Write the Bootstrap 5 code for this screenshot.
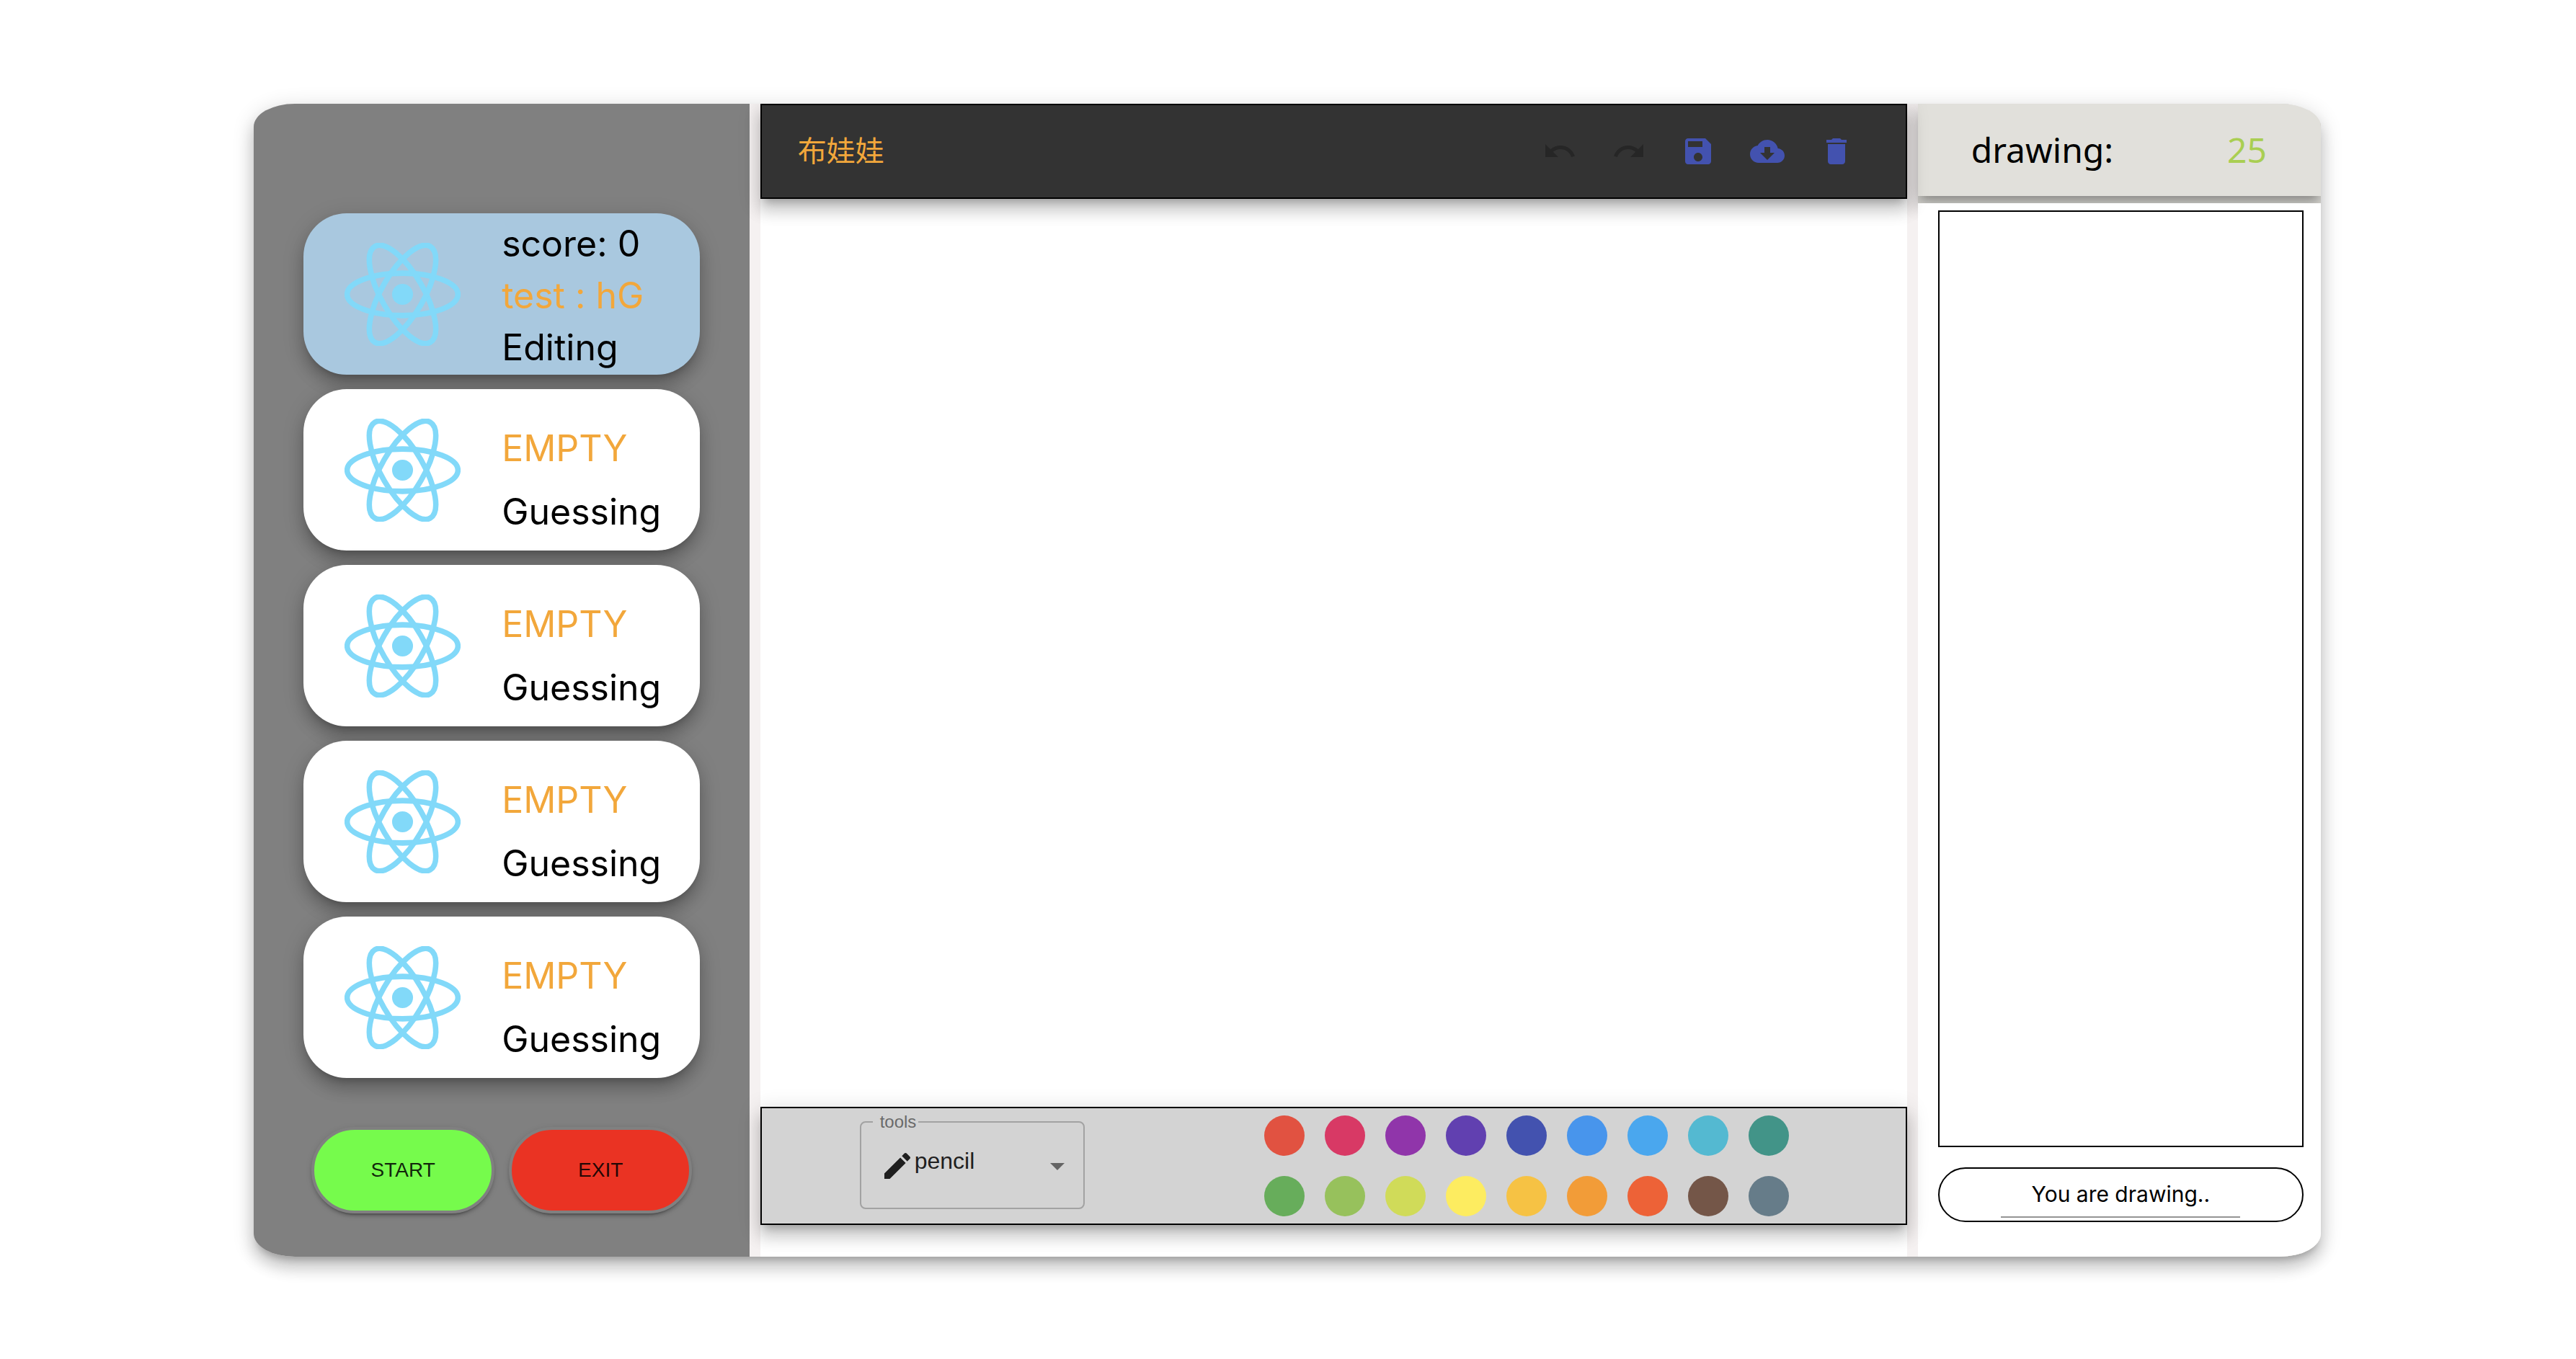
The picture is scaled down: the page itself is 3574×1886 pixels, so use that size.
<!DOCTYPE html>
<html lang="en">
<head>
<meta charset="utf-8">
<meta name="viewport" content="width=device-width, initial-scale=1">
<title>Draw and guess</title>
<link href="https://cdn.jsdelivr.net/npm/bootstrap@5.3.0/dist/css/bootstrap.min.css" rel="stylesheet">
<style>
:root { --lift: 0 10px 10px -6px rgba(0,0,0,.2), 0 16px 20px 2px rgba(0,0,0,.14), 0 6px 28px 4px rgba(0,0,0,.12); }
body { background: #fff; color: #000; font-family: Inter, "Noto Sans CJK SC", sans-serif; }
.page-wrap { padding: 144px 354px 142px 352px; min-height: 100vh; }
.room { border-radius: 57px / 32px; background: #f5f1f1; box-shadow: var(--lift); }
.room-inner { border-radius: 57px / 32px; }
.side { width: 24%; background: #808080; padding-top: 152px; }
.players { width: 80%; gap: 20px; }
.player { min-height: 224px; border-radius: 60px; background: #fff; box-shadow: var(--lift); font-size: 50px; line-height: 72px; }
.player.is-me { background: #a9c8df; }
.react-logo { width: 161px; height: 143px; }
.player-name { color: #f2a73b; }
.my-seat { padding-top: 4px; }
.open-seat { gap: 16px; padding-top: 28px; }
.side-actions { width: 528px; margin-top: 68px; gap: 20px; }
.pill-btn { height: 120px; border: 4px solid #808080; border-radius: 60px; font: 28px "Liberation Sans", sans-serif; color: rgba(0,0,0,.87);
  box-shadow: 0 6px 2px -4px rgba(0,0,0,.2), 0 4px 4px rgba(0,0,0,.14), 0 2px 10px rgba(0,0,0,.12); }
.start-btn { background: #76fb4c; }
.exit-btn { background: #ea3323; }
.board { width: 55.5%; background: #fff; }
.bar { border: 2px solid #000; box-shadow: var(--lift); z-index: 2; }
.top-bar { height: 132px; background: #333; padding: 0 48px 0 50px; }
.word { font-size: 40px; color: #f2a73b; font-family: "Noto Sans CJK SC", sans-serif; line-height: 48px; padding-bottom: 6px; }
.icon-btn { background: none; border: 0; padding: 24px; color: #4352af; line-height: 0; }
.icon-btn:disabled { color: #262626; }
.glyph { width: 48px; height: 48px; fill: currentColor; flex: none; }
.tool-bar { background: #d3d3d3; padding: 0 134px 0 136px; height: 164px; margin-bottom: 44px; }
.tool-field { width: 312px; height: 132px; border: 2px solid #a2a2a2; border-radius: 8px; margin-bottom: 12px; padding: 0 12px 0 26px; font-family: "Liberation Sans", sans-serif; }
.tool-field legend { float: none; width: auto; margin: 0 0 0 -10px; padding: 0 3px 0 10px; font-size: 24px; line-height: 22px; color: #6a6a6a; }
.tool-row { padding-top: 26px; color: #1f1f1f; }
.tool-row select { appearance: none; border: 0; background: none; padding: 0 0 14px; height: 48px; min-width: 0; font-size: 32px; line-height: 34px; color: #1f1f1f; }
.arrow { color: #646464; }
.palette { display: grid; grid-template-columns: repeat(9, 56px); gap: 28px; padding-right: 28px; }
.swatch { width: 56px; height: 56px; border: 0; border-radius: 50%; padding: 0; }
.chat { width: 19.5%; background: #e1e0db; }
.chat-head { height: 128px; margin-bottom: 10px; padding: 0 75px 0 74px; background: #e1e0db; box-shadow: var(--lift); font-family: "Noto Sans", sans-serif; font-size: 48px; line-height: 60px; }
.seconds { color: #a9ce52; }
.chat-body { background: #fff; padding: 10px 24px 48px 28px; gap: 28px; z-index: 1; }
.chat-log { border: 2px solid #000; }
.say { height: 76px; border: 2px solid #000; border-radius: 38px; }
.say input { width: 66%; height: 64px; border: 0; border-bottom: 2px solid #949494; background: none; padding: 0; font-size: 30px; text-align: center; color: #000; }
</style>
<script src="https://cdn.jsdelivr.net/npm/bootstrap@5.3.0/dist/js/bootstrap.bundle.min.js"></script>
</head>
<body>
<svg class="d-none" aria-hidden="true">
  <symbol id="react" viewBox="-11.5 -10.23 23 20.46">
    <circle r="2.08" fill="#82d9f9"/>
    <g fill="none" stroke="#82d9f9" stroke-width="1.08">
      <ellipse rx="11" ry="4.2"/><ellipse rx="11" ry="4.2" transform="rotate(60)"/><ellipse rx="11" ry="4.2" transform="rotate(120)"/>
    </g>
  </symbol>
</svg>
<main class="page-wrap d-flex">
  <div class="room flex-grow-1 d-flex">
    <div class="room-inner flex-grow-1 d-flex justify-content-between overflow-hidden">

      <aside class="side d-flex flex-column align-items-center">
        <div class="players d-flex flex-column">
          <div class="player is-me d-flex align-items-center">
            <div class="w-50 text-center lh-1"><svg class="react-logo"><use href="#react"/></svg></div>
            <div class="w-50 d-flex flex-column my-seat"><span>score: 0</span><span class="player-name">test : hG</span><span>Editing</span></div>
          </div>
          <div class="player d-flex align-items-center">
            <div class="w-50 text-center lh-1"><svg class="react-logo"><use href="#react"/></svg></div>
            <div class="w-50 d-flex flex-column open-seat"><span class="player-name">EMPTY</span><span>Guessing</span></div>
          </div>
          <div class="player d-flex align-items-center">
            <div class="w-50 text-center lh-1"><svg class="react-logo"><use href="#react"/></svg></div>
            <div class="w-50 d-flex flex-column open-seat"><span class="player-name">EMPTY</span><span>Guessing</span></div>
          </div>
          <div class="player d-flex align-items-center">
            <div class="w-50 text-center lh-1"><svg class="react-logo"><use href="#react"/></svg></div>
            <div class="w-50 d-flex flex-column open-seat"><span class="player-name">EMPTY</span><span>Guessing</span></div>
          </div>
          <div class="player d-flex align-items-center">
            <div class="w-50 text-center lh-1"><svg class="react-logo"><use href="#react"/></svg></div>
            <div class="w-50 d-flex flex-column open-seat"><span class="player-name">EMPTY</span><span>Guessing</span></div>
          </div>
        </div>
        <div class="side-actions d-flex">
          <button type="button" class="pill-btn start-btn flex-fill w-50">START</button>
          <button type="button" class="pill-btn exit-btn flex-fill w-50">EXIT</button>
        </div>
      </aside>

      <section class="board d-flex flex-column">
        <header class="bar top-bar position-relative d-flex align-items-center justify-content-between">
          <div class="word" lang="zh">布娃娃</div>
          <div class="d-flex me-n4">
            <button type="button" class="icon-btn" disabled aria-label="Undo"><svg class="glyph" viewBox="0 0 24 24"><path d="M12.5 8c-2.65 0-5.05.99-6.9 2.6L2 7v9h9l-3.62-3.62c1.39-1.16 3.16-1.88 5.12-1.88 3.54 0 6.55 2.31 7.6 5.5l2.37-.78C21.08 11.03 17.15 8 12.5 8z"/></svg></button>
            <button type="button" class="icon-btn" disabled aria-label="Redo"><svg class="glyph" viewBox="0 0 24 24"><path d="M18.4 10.6C16.55 8.99 14.15 8 11.5 8c-4.65 0-8.58 3.03-9.96 7.22L3.9 16c1.05-3.19 4.05-5.5 7.6-5.5 1.95 0 3.73.72 5.12 1.88L13 16h9V7l-3.6 3.6z"/></svg></button>
            <button type="button" class="icon-btn" aria-label="Save"><svg class="glyph" viewBox="0 0 24 24"><path d="M17 3H5c-1.11 0-2 .9-2 2v14c0 1.1.89 2 2 2h14c1.1 0 2-.9 2-2V7l-4-4zm-5 16c-1.66 0-3-1.34-3-3s1.34-3 3-3 3 1.34 3 3-1.34 3-3 3zm3-10H5V5h10v4z"/></svg></button>
            <button type="button" class="icon-btn" aria-label="Download"><svg class="glyph" viewBox="0 0 24 24"><path d="M19.35 10.04C18.67 6.59 15.64 4 12 4 9.11 4 6.6 5.64 5.35 8.04 2.34 8.36 0 10.91 0 14c0 3.31 2.69 6 6 6h13c2.76 0 5-2.24 5-5 0-2.64-2.05-4.78-4.65-4.96zM17 13l-5 5-5-5h3V9h4v4h3z"/></svg></button>
            <button type="button" class="icon-btn" aria-label="Delete"><svg class="glyph" viewBox="0 0 24 24"><path d="M6 19c0 1.1.9 2 2 2h8c1.1 0 2-.9 2-2V7H6v12zM19 4h-3.500l-1-1h-5l-1 1H5v2h14V4z"/></svg></button>
          </div>
        </header>
        <canvas class="flex-grow-1 w-100" height="1" aria-label="Drawing canvas"></canvas>
        <footer class="bar tool-bar position-relative d-flex align-items-center justify-content-between">
          <fieldset class="tool-field">
            <legend><label for="tool">tools</label></legend>
            <div class="tool-row d-flex align-items-center">
              <svg class="glyph" viewBox="0 0 24 24"><path d="M3 17.250V21h3.750L17.810 9.940l-3.750-3.750L3 17.250zM20.710 7.040c.39-.39.39-1.020 0-1.410l-2.340-2.340c-.39-.39-1.020-.39-1.410 0l-1.830 1.830 3.750 3.750 1.830-1.830z"/></svg>
              <select id="tool" class="flex-grow-1"><option>pencil</option></select>
              <svg class="glyph arrow" viewBox="0 0 24 24"><path d="M7 10l5 5 5-5z"/></svg>
            </div>
          </fieldset>
          <div class="palette">
            <button type="button" class="swatch" style="background:#e15241" aria-label="Red"></button>
            <button type="button" class="swatch" style="background:#d83965" aria-label="Pink"></button>
            <button type="button" class="swatch" style="background:#9035aa" aria-label="Purple"></button>
            <button type="button" class="swatch" style="background:#6140b0" aria-label="Deep purple"></button>
            <button type="button" class="swatch" style="background:#4352af" aria-label="Indigo"></button>
            <button type="button" class="swatch" style="background:#4895ec" aria-label="Blue"></button>
            <button type="button" class="swatch" style="background:#4aa7ee" aria-label="Light blue"></button>
            <button type="button" class="swatch" style="background:#54b9d1" aria-label="Cyan"></button>
            <button type="button" class="swatch" style="background:#429488" aria-label="Teal"></button>
            <button type="button" class="swatch" style="background:#67ad5b" aria-label="Green"></button>
            <button type="button" class="swatch" style="background:#97c15c" aria-label="Light green"></button>
            <button type="button" class="swatch" style="background:#d0db59" aria-label="Lime"></button>
            <button type="button" class="swatch" style="background:#fdec60" aria-label="Yellow"></button>
            <button type="button" class="swatch" style="background:#f6c244" aria-label="Amber"></button>
            <button type="button" class="swatch" style="background:#f29c38" aria-label="Orange"></button>
            <button type="button" class="swatch" style="background:#ed6237" aria-label="Deep orange"></button>
            <button type="button" class="swatch" style="background:#745648" aria-label="Brown"></button>
            <button type="button" class="swatch" style="background:#667c89" aria-label="Blue grey"></button>
          </div>
        </footer>
      </section>

      <aside class="chat d-flex flex-column">
        <div class="chat-head d-flex align-items-center justify-content-between"><span>drawing:</span><span class="seconds">25</span></div>
        <div class="chat-body position-relative flex-grow-1 d-flex flex-column">
          <div class="chat-log flex-grow-1"></div>
          <div class="say d-flex align-items-center justify-content-center"><input type="text" value="You are drawing.." readonly aria-label="Message"></div>
        </div>
      </aside>
    </div>
  </div>
</main>
</body>
</html>
